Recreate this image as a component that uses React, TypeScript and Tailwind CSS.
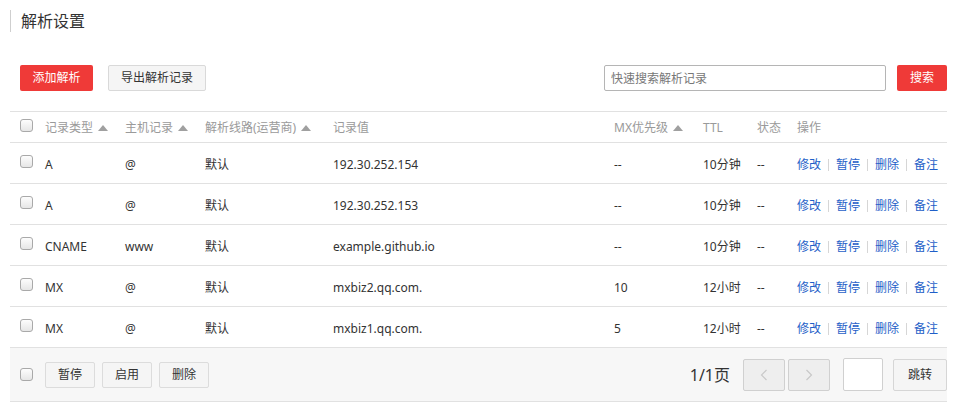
import React from "react";

type Row = { type: string; host: string; line: string; value: string; mx: string; ttl: string };

const rows: Row[] = [
  { type: "A", host: "@", line: "默认", value: "192.30.252.154", mx: "--", ttl: "10分钟" },
  { type: "A", host: "@", line: "默认", value: "192.30.252.153", mx: "--", ttl: "10分钟" },
  { type: "CNAME", host: "www", line: "默认", value: "example.github.io", mx: "--", ttl: "10分钟" },
  { type: "MX", host: "@", line: "默认", value: "mxbiz2.qq.com.", mx: "10", ttl: "12小时" },
  { type: "MX", host: "@", line: "默认", value: "mxbiz1.qq.com.", mx: "5", ttl: "12小时" },
];

const cols = "grid grid-cols-[35px_80px_80px_128px_281px_89px_54px_40px_1fr] items-center";

function Check() {
  return (
    <span className="block w-[13px] h-[13px] rounded-[3px] border border-[#a9a9a9] bg-gradient-to-b from-[#fdfdfd] to-[#e6e6e6] -translate-y-[3px]" />
  );
}

function Sort() {
  return (
    <span className="inline-block ml-[5px] mb-[2px] w-0 h-0 border-l-[5px] border-r-[5px] border-b-[6px] border-l-transparent border-r-transparent border-b-[#a0a0a0] align-middle" />
  );
}

function Sep() {
  return <span className="mx-[7px] w-px h-[12px] bg-[#d6d6d6]" />;
}

export default function App() {
  return (
    <div className="w-[957px] h-[414px] bg-white text-[#333] text-[12px] font-['Noto_Sans','Noto_Sans_CJK_SC',sans-serif]">
      {/* 标题 */}
      <div className="pt-[10px] pl-[10px] flex items-center">
        <span className="w-px h-[22px] bg-[#cfcfcf]" />
        <h1 className="ml-[10px] text-[16px] leading-[22px] text-[#333]">解析设置</h1>
      </div>

      {/* 工具栏 */}
      <div className="mt-[33px] pl-[20px] pr-[10px] flex items-center">
        <button className="h-[26px] w-[73px] rounded-[2px] bg-[#ef3a38] text-white text-[12px]">添加解析</button>
        <button className="ml-[15px] h-[26px] w-[98px] rounded-[2px] border border-[#d9d9d9] bg-[#f5f5f5] text-[#333] text-[12px]">导出解析记录</button>
        <div className="ml-auto flex items-center">
          <input
            placeholder="快速搜索解析记录"
            className="h-[26px] w-[282px] border border-[#b5b5b5] rounded-[2px] px-[6px] text-[12px] placeholder:text-[#777] outline-none"
          />
          <button className="ml-[11px] h-[26px] w-[50px] rounded-[2px] bg-[#ef3a38] text-white text-[12px]">搜索</button>
        </div>
      </div>

      {/* 表格 */}
      <div className="mt-[20px] ml-[10px] w-[937px] border-t border-[#e1e1e1]">
        <div className={`${cols} h-[31px] border-b border-[#e1e1e1] text-[#9a9a9a] pt-[2px]`}>
          <div className="pl-[10px]"><Check /></div>
          <div>记录类型<Sort /></div>
          <div>主机记录<Sort /></div>
          <div>解析线路(运营商)<Sort /></div>
          <div>记录值</div>
          <div>MX优先级<Sort /></div>
          <div>TTL</div>
          <div>状态</div>
          <div>操作</div>
        </div>
        {rows.map((r, i) => (
          <div key={i} className={`${cols} h-[41px] border-b border-[#e1e1e1] pt-[3px]`}>
            <div className="pl-[10px]"><Check /></div>
            <div>{r.type}</div>
            <div>{r.host}</div>
            <div>{r.line}</div>
            <div>{r.value}</div>
            <div>{r.mx}</div>
            <div>{r.ttl}</div>
            <div>--</div>
            <div className="flex items-center text-[#1f5fc8]">
              <a>修改</a>
              <Sep />
              <a>暂停</a>
              <Sep />
              <a>删除</a>
              <Sep />
              <a>备注</a>
            </div>
          </div>
        ))}

        {/* 底部批量操作与分页 */}
        <div className="h-[54px] bg-[#f7f7f7] border-b border-[#e1e1e1] flex items-center pl-[10px]">
          <span className="translate-y-[3px]"><Check /></span>
          <div className="ml-[12px] flex gap-[7px]">
            {["暂停", "启用", "删除"].map((t) => (
              <button key={t} className="h-[26px] w-[50px] rounded-[2px] border border-[#dcdcdc] bg-[#f5f5f5] text-[12px] text-[#333]">{t}</button>
            ))}
          </div>
          <div className="ml-auto flex items-center">
            <span className="text-[16px] text-[#333] mr-[13px]">1/1页</span>
            <button className="h-[32px] w-[42px] rounded-[2px] border border-[#d0d0d0] bg-[#eeeeee] flex items-center justify-center">
              <svg width="8" height="12" viewBox="0 0 8 12"><path d="M6.5 1 L1.5 6 L6.5 11" fill="none" stroke="#c8c8c8" strokeWidth="1.2" /></svg>
            </button>
            <button className="ml-[3px] h-[32px] w-[42px] rounded-[2px] border border-[#d0d0d0] bg-[#eeeeee] flex items-center justify-center">
              <svg width="8" height="12" viewBox="0 0 8 12"><path d="M1.5 1 L6.5 6 L1.5 11" fill="none" stroke="#c8c8c8" strokeWidth="1.2" /></svg>
            </button>
            <input className="ml-[13px] h-[33px] w-[40px] rounded-[2px] border border-[#d0d0d0] bg-white outline-none" />
            <button className="ml-[10px] h-[32px] w-[54px] rounded-[2px] border border-[#d6d6d6] bg-[#f5f5f5] text-[12px] text-[#333]">跳转</button>
          </div>
        </div>
      </div>
    </div>
  );
}
